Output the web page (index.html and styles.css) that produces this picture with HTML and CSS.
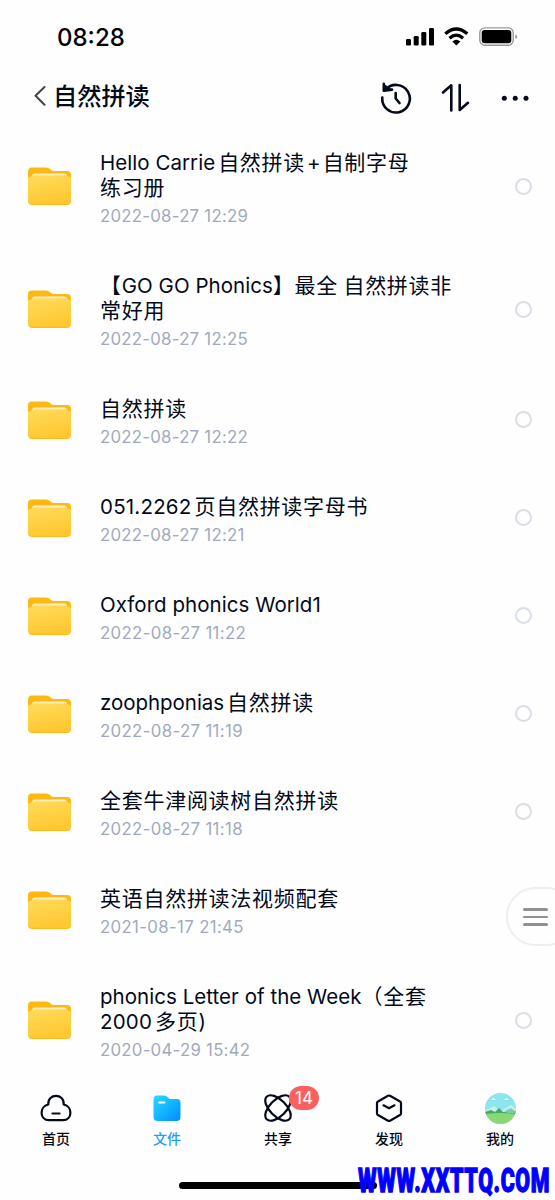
FILE: index.html
```html
<!DOCTYPE html>
<html lang="zh-CN">
<head>
<meta charset="utf-8">
<title>自然拼读</title>
<link rel="stylesheet" href="styles.css">
</head>
<body>
<svg class="defs" width="0" height="0" aria-hidden="true">
  <defs>
    <linearGradient id="front" x1="0" y1="0" x2="0.35" y2="1"><stop offset="0" stop-color="#ffdc5b"/><stop offset="1" stop-color="#ffc833"/></linearGradient>
    <linearGradient id="paper" x1="0" y1="0" x2="0" y2="1"><stop offset="0" stop-color="#fff3cf"/><stop offset="1" stop-color="#ffe48c"/></linearGradient>
    <linearGradient id="blue" x1="0" y1="0" x2="1" y2="1"><stop offset="0" stop-color="#28dcff"/><stop offset="1" stop-color="#008cff"/></linearGradient>
    <clipPath id="round"><circle cx="15.5" cy="15.5" r="15.5"/></clipPath>
    <symbol id="folder" viewBox="0 0 43 38">
      <path d="M0 11V4Q0 .5 4 .5H18Q20.500 .5 22 2L23 3Q24 4 26 4H39Q43 4 43 8V14H0Z" fill="#ffb812"/>
      <path d="M0 15Q2 14 3.500 10H39.500L43 14V33.500Q43 38 38.500 38H4.500Q0 38 0 33.500Z" fill="#ffbb1c"/>
      <path d="M3.500 10.500Q4 6.500 7 6.500H36Q39 6.500 39.500 10.500Z" fill="url(#paper)"/>
      <path d="M0 12Q0 9.500 3 9.500L5 8.500H38L40 9.500Q43 9.500 43 12V32.500Q43 36.800 38.500 36.800H4.500Q0 36.800 0 32.500Z" fill="url(#front)"/>
    </symbol>
  </defs>
</svg>
<div class="screen">
  <header class="status">
    <span class="clock">08:28</span>
    <svg class="status-icons" width="112" height="20" viewBox="0 0 112 20">
      <rect x="0" y="12" width="5" height="6.500" rx="1.300"/><rect x="7.700" y="9" width="5" height="9.500" rx="1.300"/><rect x="15.300" y="5" width="5" height="13.500" rx="1.300"/><rect x="23" y="1" width="5" height="17.500" rx="1.300"/>
      <g fill="none" stroke="#000" stroke-width="3.200"><path d="M39.300 6.800Q50.300-2.800 61.300 6.800"/><path d="M43.500 11.200Q50.300 5.200 57.100 11.200"/></g>
      <path d="M46.300 14.400Q50.300 11.300 54.300 14.400L50.300 18.500Z"/>
      <rect x="73.800" y=".9" width="33.400" height="17.400" rx="5" fill="none" stroke="#999" stroke-width="1.400"/><rect x="75.700" y="3" width="29.600" height="13.300" rx="3"/><path d="M109.300 7.500Q111.300 8.200 111.300 9.700T109.300 12Z" fill="#999"/>
    </svg>
  </header>
  <div class="toolbar">
    <svg class="back" width="12" height="20" viewBox="0 0 12 20"><path d="M10.500 1L1.500 9.800L10.500 18.800"/></svg>
    <h1>自然拼读</h1>
    <svg class="actions" width="150" height="32" viewBox="0 0 150 32">
      <path d="M2.300 15.500A13.800 13.800 0 1 0 5.600 7.700"/><path class="solid" d="M3.500 1.500V9L11.500 7.300"/><path d="M3.800 1.800V8.800L12 7.600L4.500 7.500"/><path d="M15.700 11V16.500L19.500 21"/>
      <path d="M63 10.500L71.300 3.300V28.500M79.700 3V28L88 20.800"/>
      <g class="solid"><circle cx="124.300" cy="16.200" r="2.500"/><circle cx="135.200" cy="16.200" r="2.500"/><circle cx="146" cy="16.200" r="2.500"/></g>
    </svg>
  </div>
  <main class="files">
    <article class="row tall"><svg class="folder"><use href="#folder"/></svg><div class="info"><h2><span class="line"><span class="en gap">Hello Carrie</span>自然拼读<span class="plus">+</span>自制字母</span><span class="line">练习册</span></h2><time>2022-08-27 12:29</time></div><i class="check"></i></article>
    <article class="row tall"><svg class="folder"><use href="#folder"/></svg><div class="info"><h2><span class="line">【<span class="en">GO GO Phonics</span>】最全 自然拼读非</span><span class="line">常好用</span></h2><time>2022-08-27 12:25</time></div><i class="check"></i></article>
    <article class="row"><svg class="folder"><use href="#folder"/></svg><div class="info"><h2><span class="line">自然拼读</span></h2><time>2022-08-27 12:22</time></div><i class="check"></i></article>
    <article class="row"><svg class="folder"><use href="#folder"/></svg><div class="info"><h2><span class="line"><span class="en digits gap">051.2262</span>页自然拼读字母书</span></h2><time>2022-08-27 12:21</time></div><i class="check"></i></article>
    <article class="row"><svg class="folder"><use href="#folder"/></svg><div class="info"><h2><span class="line"><span class="en">Oxford phonics World1</span></span></h2><time class="wide">2022-08-27 11:22</time></div><i class="check"></i></article>
    <article class="row"><svg class="folder"><use href="#folder"/></svg><div class="info"><h2><span class="line"><span class="en tight gap">zoophponias</span>自然拼读</span></h2><time class="wide">2022-08-27 11:19</time></div><i class="check"></i></article>
    <article class="row"><svg class="folder"><use href="#folder"/></svg><div class="info"><h2><span class="line">全套牛津阅读树自然拼读</span></h2><time class="wide">2022-08-27 11:18</time></div><i class="check"></i></article>
    <article class="row"><svg class="folder"><use href="#folder"/></svg><div class="info"><h2><span class="line">英语自然拼读法视频配套</span></h2><time class="wide">2021-08-17 21:45</time></div></article>
    <article class="row tall"><svg class="folder"><use href="#folder"/></svg><div class="info"><h2><span class="line"><span class="en">phonics Letter of the Week</span>（全套</span><span class="line"><span class="en digits gap">2000</span>多页<span class="en">)</span></span></h2><time>2020-04-29 15:42</time></div><i class="check"></i></article>
  </main>
  <nav class="tabs">
    <a class="tab"><svg width="32" height="32" viewBox="0 0 32 32"><path d="M8.300 11.500C7.500 0 24.500 0 23.700 11.500C33 13.500 32.500 27.200 23 27.200H9C-.5 27.200-1 13.500 8.300 11.500Z"/><path d="M12.500 20.500H19.500"/></svg><span>首页</span></a>
    <a class="tab active"><svg width="32" height="32" viewBox="0 0 32 32"><path class="fill" d="M2.500 6Q2.500 2.500 6 2.500H13Q15 2.500 16.500 4L18.500 6H26Q29.500 6 29.500 9.500V24Q29.500 28 25.500 28H6.500Q2.500 28 2.500 24Z"/><path class="tag" d="M8.300 9.500H13.300"/></svg><span>文件</span></a>
    <a class="tab"><svg width="32" height="32" viewBox="0 0 32 32"><ellipse cx="16" cy="15" rx="16" ry="8.200" transform="rotate(45 16 15)"/><ellipse cx="16" cy="15" rx="16" ry="8.200" transform="rotate(-45 16 15)"/></svg><span>共享</span><b class="badge">14</b></a>
    <a class="tab"><svg width="32" height="32" viewBox="0 0 32 32"><path d="M15 2.800Q16 2.200 17 2.800L27 8.500Q28 9 28 10V20.500Q28 21.500 27 22L17 27.700Q16 28.300 15 27.700L5 22Q4 21.500 4 20.500V10Q4 9 5 8.500Z"/><path d="M10.500 12.300L16 15.300L21.500 12.300"/></svg><span>发现</span></a>
    <a class="tab"><svg class="avatar" width="31" height="31" viewBox="0 0 31 31"><g clip-path="url(#round)"><rect width="31" height="31" fill="#8de5ed"/><path d="M0 18L9 13L15 18L21 15L26 12L31 16V22H0Z" fill="#c8f1e6"/><path d="M0 19L6 17L10 19L14 15L18 19L31 18V23H0Z" fill="#47a965"/><path d="M20 18L26 15L31 19V20H22Z" fill="#78cbb6"/><path d="M0 21Q15 19 31 21V31H0Z" fill="#88d874"/><path d="M6 7L8 5L10 6L12 7ZM19 7L21 5L24 7Z" fill="#e9ffff"/></g></svg><span>我的</span></a>
  </nav>
  <div class="home-bar"></div>
  <button class="drawer" aria-label="菜单"><i></i><i></i><i></i></button>
  <div class="watermark"><span>WWW.XXTTQ.COM</span></div>
</div>
</body>
</html>
```
FILE: styles.css
```css
* { box-sizing: border-box; }
body { margin: 0; background: #fefefe; color: #030a1a; font-family: Inter, "Noto Sans CJK SC", sans-serif; }
.defs { position: absolute; }
.screen { position: relative; width: 555px; height: 1200px; overflow: hidden; }
.status { height: 72px; padding: 27px 37px 0 57px; display: flex; justify-content: space-between; align-items: flex-start; color: #000; }
.clock { font-size: 24px; line-height: 21px; font-weight: 500; }
.status-icons { display: block; }
.toolbar { height: 52.5px; display: flex; align-items: flex-start; padding: 10px 25px 0 34px; }
.toolbar svg { fill: none; stroke: #030a1a; stroke-width: 2.600; stroke-linecap: round; stroke-linejoin: round; }
.toolbar .back { margin-top: 4px; stroke: #444; stroke-width: 2; }
.toolbar .solid { fill: #030a1a; stroke: none; }
h1 { margin: -1px 0 0 7px; font: 500 24.200px/28px "Noto Sans CJK SC", sans-serif; }
.actions { margin-left: auto; }
.files { height: 957px; }
.row { height: 98px; display: flex; align-items: center; padding: 0 23px 0 28px; }
.row.tall { height: 123px; }
.folder { width: 43px; height: 38px; flex: none; }
.info { flex: 1; align-self: flex-start; padding-top: 24.500px; margin-left: 29px; white-space: nowrap; }
h2 { margin: 0; font: 400 21px/25px "Noto Sans CJK SC", sans-serif; letter-spacing: .72px; }
.line { display: block; height: 25px; }
.en, .plus { font-family: Inter, sans-serif; font-size: 20.5px; line-height: 1; letter-spacing: .04px; }
.tight { letter-spacing: -.04px; }
.digits { letter-spacing: .2px; }
.gap { margin-right: 3px; }
.plus { margin: 0 2px; }
time { display: block; margin-top: 6.5px; font-size: 16.8px; line-height: 20px; letter-spacing: .25px; color: #a1aabd; }
time.wide { letter-spacing: .35px; }
.check { width: 17px; height: 17px; border: 2px solid #dbdee7; border-radius: 50%; flex: none; }
.tabs { height: 98px; display: flex; padding-top: 11px; }
.tab { flex: 1; display: flex; flex-direction: column; align-items: center; position: relative; padding-left: 1px; }
.tab svg { fill: none; stroke: #030a1a; stroke-width: 2.200; stroke-linecap: round; stroke-linejoin: round; height: 32px; }
.tab .avatar { stroke: none; height: 31px; margin-bottom: 1px; }
.tab .fill { fill: url(#blue); stroke: none; }
.tab .tag { stroke: #fff; }
.tab span { font: 500 14px/20px "Noto Sans CJK SC", sans-serif; margin-top: 3px; }
.active { color: #1aa0fa; }
.badge { position: absolute; left: 67px; top: -7px; width: 30px; height: 24px; border-radius: 12px; background: #fa6060; color: #fff; font: 400 17px/24px Inter, sans-serif; text-align: center; }
.home-bar { width: 198px; height: 7px; border-radius: 4px; background: #000; margin: 2px 0 0 179px; }
.drawer { position: absolute; left: 506px; top: 887px; width: 70px; height: 59px; border: 2px solid #eee; border-radius: 30px; background: #fefefe; display: flex; flex-direction: column; align-items: flex-start; justify-content: center; gap: 5px; padding: 1px 0 0 15px; }
.drawer i { width: 25px; height: 2.700px; border-radius: 2px; background: #909090; }
.watermark { position: absolute; left: 358px; top: 1160px; width: 192px; height: 40px; color: #00f; }
.watermark span { display: inline-block; font: 900 34px/40px Roboto, sans-serif; letter-spacing: 1px; -webkit-text-stroke: 1.300px #00f; white-space: nowrap; transform: scaleX(.63); transform-origin: left; }
```
